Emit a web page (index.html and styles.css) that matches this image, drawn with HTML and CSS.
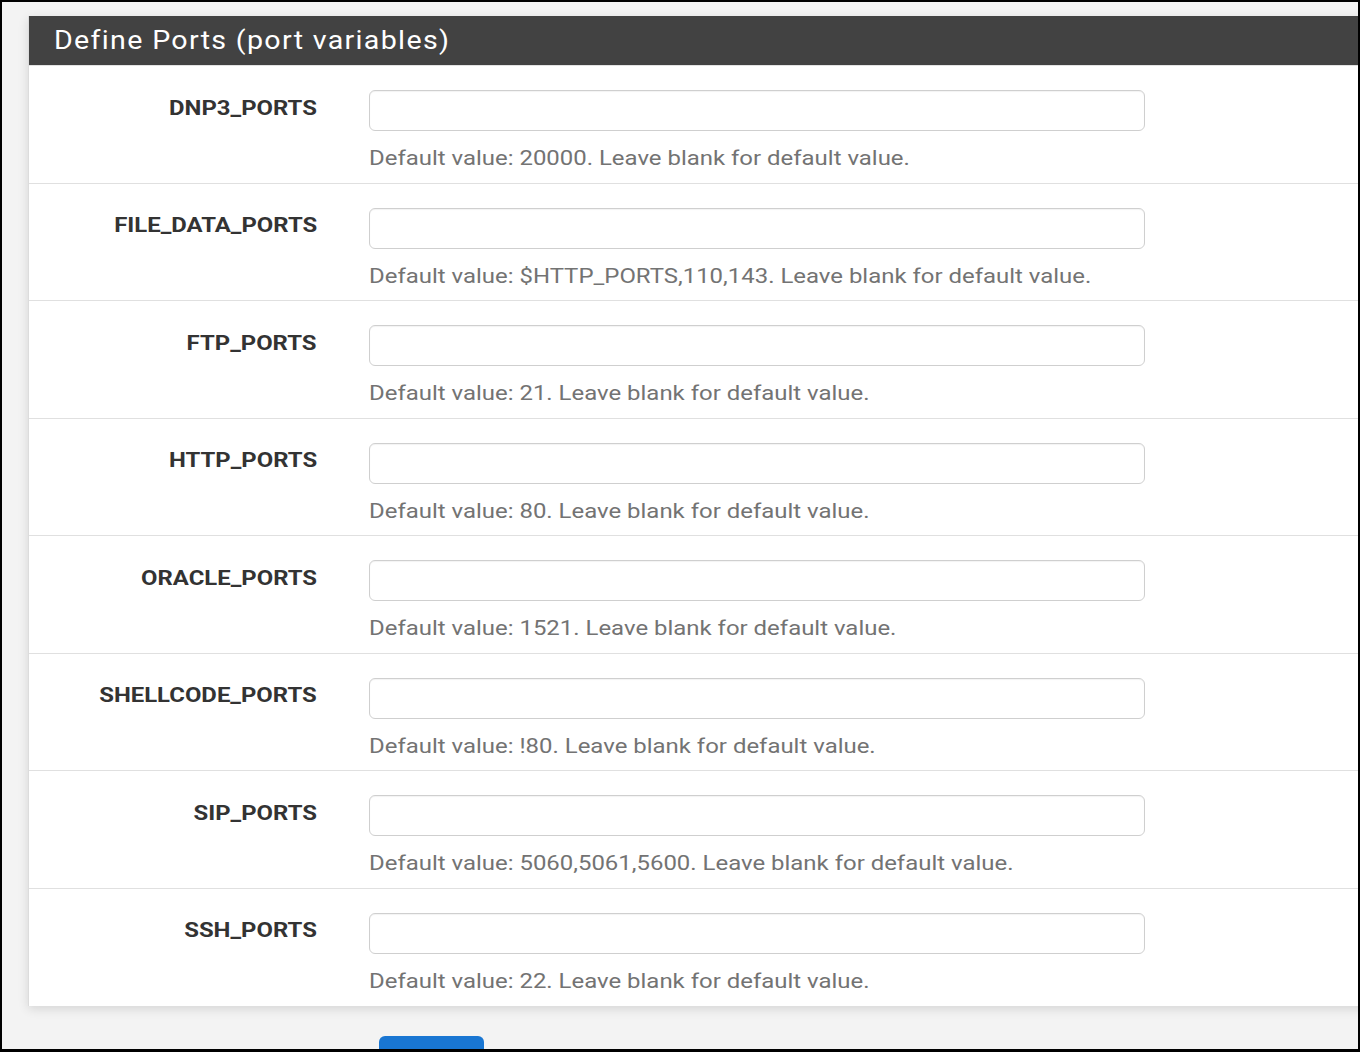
FILE: index.html
```html
<!DOCTYPE html>
<html>
<head>
<meta charset="utf-8">
<link rel="stylesheet" href="styles.css">
</head>
<body>
<div class="frame">
  <div class="panel">
    <div class="panel-heading"><h2 class="panel-title"><span class="title-text">Define Ports (port variables)</span></h2></div>
    <div class="panel-body">
      <div class="row">
        <label class="label"><span class="label-text">DNP3_PORTS</span></label>
        <div class="field">
          <input class="input" type="text">
          <div class="help"><span class="help-text">Default value: 20000. Leave blank for default value.</span></div>
        </div>
      </div>
      <div class="row">
        <label class="label"><span class="label-text">FILE_DATA_PORTS</span></label>
        <div class="field">
          <input class="input" type="text">
          <div class="help"><span class="help-text">Default value: $HTTP_PORTS,110,143. Leave blank for default value.</span></div>
        </div>
      </div>
      <div class="row">
        <label class="label"><span class="label-text">FTP_PORTS</span></label>
        <div class="field">
          <input class="input" type="text">
          <div class="help"><span class="help-text">Default value: 21. Leave blank for default value.</span></div>
        </div>
      </div>
      <div class="row">
        <label class="label"><span class="label-text">HTTP_PORTS</span></label>
        <div class="field">
          <input class="input" type="text">
          <div class="help"><span class="help-text">Default value: 80. Leave blank for default value.</span></div>
        </div>
      </div>
      <div class="row">
        <label class="label"><span class="label-text">ORACLE_PORTS</span></label>
        <div class="field">
          <input class="input" type="text">
          <div class="help"><span class="help-text">Default value: 1521. Leave blank for default value.</span></div>
        </div>
      </div>
      <div class="row">
        <label class="label"><span class="label-text">SHELLCODE_PORTS</span></label>
        <div class="field">
          <input class="input" type="text">
          <div class="help"><span class="help-text">Default value: !80. Leave blank for default value.</span></div>
        </div>
      </div>
      <div class="row">
        <label class="label"><span class="label-text">SIP_PORTS</span></label>
        <div class="field">
          <input class="input" type="text">
          <div class="help"><span class="help-text">Default value: 5060,5061,5600. Leave blank for default value.</span></div>
        </div>
      </div>
      <div class="row">
        <label class="label"><span class="label-text">SSH_PORTS</span></label>
        <div class="field">
          <input class="input" type="text">
          <div class="help"><span class="help-text">Default value: 22. Leave blank for default value.</span></div>
        </div>
      </div>
    </div>
  </div>
  <div class="actions">
    <button class="btn-primary" type="button" aria-label="Save"></button>
  </div>
</div>
</body>
</html>
```

FILE: styles.css
```css
html, body {
  margin: 0;
  padding: 0;
}
body {
  background: #000;
  font-family: Roboto, "Liberation Sans", sans-serif;
}
.frame {
  box-sizing: border-box;
  width: 1360px;
  height: 1052px;
  border-top: 2px solid #000;
  border-left: 2px solid #000;
  border-right: 2px solid #000;
  border-bottom: 3px solid #000;
  background: #f3f3f3;
  overflow: hidden;
  padding-top: 14px;
}
.panel {
  margin-left: 26px;
  width: 1400px;
  background: #fff;
  border-left: 1px solid #dcdcdc;
  box-shadow: 0 3px 10px rgba(0, 0, 0, 0.12);
}
.panel-heading {
  background: #424242;
  height: 49px;
  border-bottom: 1px solid #e2e2e2;
  padding-left: 25px;
  display: flex;
  align-items: center;
}
.panel-title {
  margin: 0;
  color: #fff;
  font-weight: 400;
  font-size: 26px;
  line-height: 1;
  padding-bottom: 1px;
}
.title-text {
  display: inline-block;
  letter-spacing: 1.2px;
  transform: scaleX(1.1);
  transform-origin: left center;
}
.row {
  display: grid;
  grid-template-columns: 288px 776px;
  column-gap: 52px;
  border-top: 1px solid #e0e0e0;
}
.row:first-child {
  border-top: none;
}
.label {
  padding-top: 27.5px;
  text-align: right;
  font-size: 20.5px;
  line-height: 28.57px;
  font-weight: 700;
  color: #333;
}
.label-text {
  display: inline-block;
  transform: scaleX(1.165);
  transform-origin: right center;
}
.field {
  padding-top: 24px;
  padding-bottom: 10px;
}
.input {
  display: block;
  box-sizing: border-box;
  width: 776px;
  height: 41px;
  margin: 0;
  border: 1px solid #cfcfcf;
  border-radius: 6px;
  background: #fff;
  box-shadow: inset 0 1px 1px rgba(0, 0, 0, 0.05);
}
.help {
  margin-top: 13px;
  font-size: 21px;
  line-height: 28.57px;
  color: #737373;
  white-space: nowrap;
}
.help-text {
  display: inline-block;
  transform: scaleX(1.14);
  transform-origin: left center;
}
.actions {
  padding-top: 30px;
  padding-left: 377px;
}
.btn-primary {
  display: block;
  width: 105px;
  height: 44px;
  border: none;
  border-radius: 6px;
  background: #1976d2;
}
```
